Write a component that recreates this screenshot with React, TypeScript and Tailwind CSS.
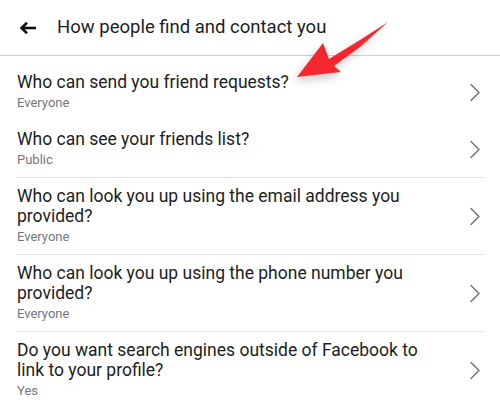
const rows = [
  { title: 'Who can send you friend requests?', value: 'Everyone', last: false, hideLine: true },
  { title: 'Who can see your friends list?', value: 'Public', last: false, hideLine: false },
  { title: 'Who can look you up using the email address you provided?', value: 'Everyone', last: false, hideLine: false },
  { title: 'Who can look you up using the phone number you provided?', value: 'Everyone', last: false, hideLine: false },
  { title: 'Do you want search engines outside of Facebook to link to your profile?', value: 'Yes', last: true, hideLine: false },
];

const Chevron = () => (
  <svg width="12" height="19" viewBox="0 0 12 19" fill="none">
    <path d="M2 1.5 L10 9.5 L2 17.5" stroke="#6a6d72" strokeWidth="1.4" strokeLinecap="round" strokeLinejoin="round" />
  </svg>
);

export default function App() {
  return (
    <div className="relative w-[500px] h-[419px] overflow-hidden bg-white font-['Roboto','Liberation_Sans',sans-serif]">
      <div className="flex h-[56px] items-center border-b border-[#cfcfd2] pl-[19px]">
        <svg width="18" height="14" viewBox="0 0 18 14" fill="none">
          <path d="M17 7 H3" stroke="#111" strokeWidth="2.6" />
          <path d="M8 1.8 L2.6 7 L8 12.2" stroke="#111" strokeWidth="2.6" strokeLinejoin="miter" />
        </svg>
        <h1 className="ml-[20px] text-[18.5px] leading-none text-[#1c1e21]">How people find and contact you</h1>
      </div>

      <div className="mt-[8px]">
        {rows.map((r) => (
          <div
            key={r.title}
            className={`mx-[16px] flex items-center border-b ${r.hideLine || r.last ? 'border-transparent' : 'border-[#e6e6e8]'}`}
          >
            <div className="w-[425px] pl-px pt-[8px] pb-[6px]">
              <div className="text-[17.5px] leading-[20px] text-[#1c1e21]">{r.title}</div>
              <div className="text-[13px] leading-[22px] text-[#75777c]">{r.value}</div>
            </div>
            <div className="flex flex-1 justify-end pr-[3px]">
              <Chevron />
            </div>
          </div>
        ))}
      </div>

      {/* annotation arrow */}
      <svg className="pointer-events-none absolute left-0 top-0" width="500" height="419" viewBox="0 0 500 419">
        <defs>
          <filter id="sh" x="-50%" y="-50%" width="200%" height="200%">
            <feDropShadow dx="-2" dy="4" stdDeviation="4" floodColor="#000" floodOpacity="0.22" />
          </filter>
        </defs>
        <polygon
          points="297,77 323,43 329,59 360,40 388,22 360,47 334,66 341,72"
          fill="#f5282d"
          filter="url(#sh)"
        />
      </svg>
    </div>
  );
}
